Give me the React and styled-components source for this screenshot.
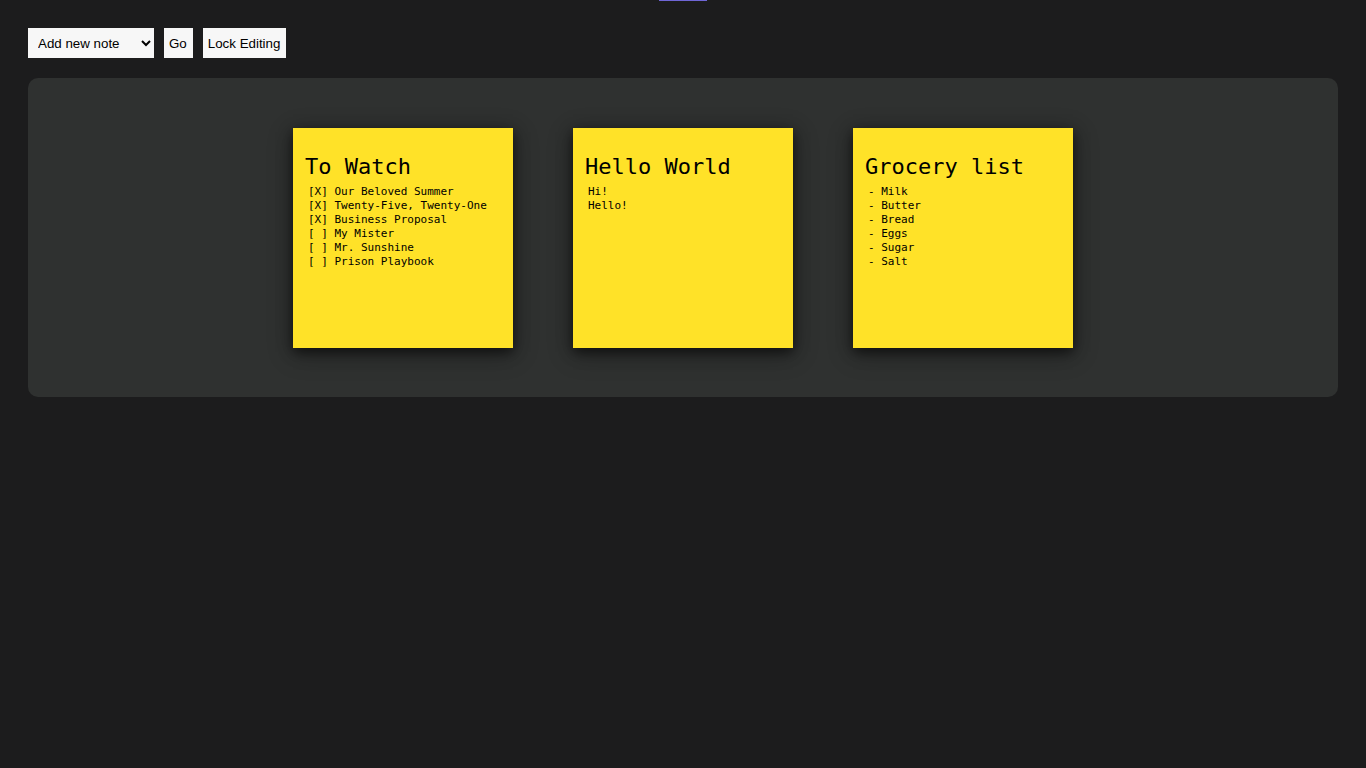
import React from "react";
import styled, { createGlobalStyle } from "styled-components";

const GlobalStyle = createGlobalStyle`
  body { margin: 0; background: #1c1c1d; color: #000; }
  * { box-sizing: border-box; }
`;

const Page = styled.div`
  padding: 28px;
  position: relative;
`;

const LoadingMark = styled.div`
  position: absolute;
  top: 0;
  left: 50%;
  margin-left: -24px;
  width: 48px;
  height: 1px;
  background: #6f66d6;
`;

const Toolbar = styled.form`
  display: flex;
  gap: 10px;
  margin-bottom: 20px;
`;

const Select = styled.select`
  height: 30px;
  width: 126px;
  padding: 0 6px;
  border: 0;
  border-radius: 0;
  background-color: #f7f7f7;
  color: #000;
  font-family: "Liberation Sans", Arial, sans-serif;
`;

const Button = styled.button`
  height: 30px;
  padding: 0 6px 0 5px;
  border: 0;
  background: #f7f7f7;
  color: #000;
  font-family: "Liberation Sans", Arial, sans-serif;
  white-space: nowrap;
`;

const Board = styled.main`
  display: flex;
  flex-wrap: wrap;
  justify-content: center;
  gap: 60px;
  padding: 50px 20px 49px;
  border-radius: 10px;
  background: #2f3130;
`;

const Note = styled.article`
  width: 220px;
  height: 220px;
  padding: 24px 12px;
  background: #ffe228;
  box-shadow: 0 4px 12px rgba(0, 0, 0, 0.6), 0 6px 24px rgba(0, 0, 0, 0.3);
`;

const Title = styled.h2`
  margin: 0;
  font: 400 22px/30px Consolas, "DejaVu Sans Mono", monospace;
  white-space: nowrap;
`;

const Body = styled.pre`
  margin: 3px 0 0;
  padding: 0 3px;
  font: 11px/14px Consolas, "DejaVu Sans Mono", monospace;
`;

const notes = [
  {
    title: "To Watch",
    lines: [
      "[X] Our Beloved Summer",
      "[X] Twenty-Five, Twenty-One",
      "[X] Business Proposal",
      "[ ] My Mister",
      "[ ] Mr. Sunshine",
      "[ ] Prison Playbook",
    ],
  },
  { title: "Hello World", lines: ["Hi!", "Hello!"] },
  {
    title: "Grocery list",
    lines: ["- Milk", "- Butter", "- Bread", "- Eggs", "- Sugar", "- Salt"],
  },
];

export default function App() {
  return (
    <Page>
      <GlobalStyle />
      <LoadingMark />
      <Toolbar onSubmit={(e) => e.preventDefault()}>
        <Select aria-label="Note action" defaultValue="add">
          <option value="add">Add new note</option>
        </Select>
        <Button type="submit">Go</Button>
        <Button type="button">Lock Editing</Button>
      </Toolbar>
      <Board>
        {notes.map((note) => (
          <Note key={note.title}>
            <Title>{note.title}</Title>
            <Body>{note.lines.join("\n")}</Body>
          </Note>
        ))}
      </Board>
    </Page>
  );
}
